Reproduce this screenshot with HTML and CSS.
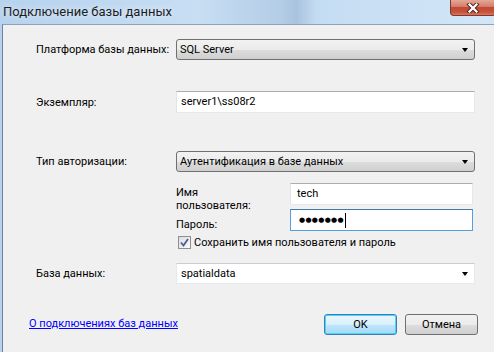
FILE: index.html
```html
<!DOCTYPE html>
<html lang="ru">
<head>
  <meta charset="UTF-8">
  <title>Подключение базы данных</title>
  <link rel="stylesheet" href="styles.css">
</head>
<body>
  <div class="window">
    <div class="titlebar">
      <span class="title">Подключение базы данных</span>
      <div class="close">
        <svg width="18" height="10" viewBox="0 0 18 10">
          <path d="M5.5 1.5 L12.5 8.5 M12.5 1.5 L5.5 8.5" stroke="#4e2a26" stroke-width="4.2" stroke-linecap="square"/>
          <path d="M5.5 1.5 L12.5 8.5 M12.5 1.5 L5.5 8.5" stroke="#ffffff" stroke-width="2.2" stroke-linecap="square"/>
        </svg>
      </div>
    </div>

    <div class="client">
      <div class="form">
        <label class="label">Платформа базы данных:</label>
        <div class="combo">SQL Server<span class="arrow"></span></div>

        <label class="label row-instance">Экземпляр:</label>
        <div class="textbox row-instance">server1\ss08r2</div>

        <label class="label row-auth">Тип авторизации:</label>
        <div class="combo row-auth">Аутентификация в базе данных<span class="arrow"></span></div>

        <div class="credentials">
          <label class="sublabel user">Имя<br>пользователя:</label>
          <div class="textbox small">tech</div>
          <label class="sublabel pass">Пароль:</label>
          <div class="textbox small focused"><span class="dots">●●●●●●●</span><span class="caret"></span></div>
        </div>

        <div class="check-row">
          <span class="checkbox">
            <svg width="9" height="9" viewBox="0 0 9 9"><path d="M1 4.5 L3.5 7.5 L8 1" fill="none" stroke="#4a5f97" stroke-width="1.8"/></svg>
          </span>
          <span>Сохранить имя пользователя и пароль</span>
        </div>

        <label class="label row-db">База данных:</label>
        <div class="combo editable row-db">spatialdata<span class="arrow"></span></div>
      </div>

      <div class="footer">
        <a class="help-link" href="#">О подключениях баз данных</a>
        <div class="buttons">
          <button class="btn default">OK</button>
          <button class="btn">Отмена</button>
        </div>
      </div>
    </div>
  </div>
</body>
</html>
```

FILE: styles.css
```css
html, body {
  margin: 0;
  padding: 0;
}
body {
  width: 494px;
  height: 352px;
  overflow: hidden;
  font-family: Roboto, "Liberation Sans", sans-serif;
  font-size: 11px;
  color: #000;
  background: #a9c6e3;
}
.window {
  height: 352px;
  display: flex;
  flex-direction: column;
  background: linear-gradient(90deg, #b6d2ee 0%, #c7def3 40%, #b4cde6 57%, #a9c3de 60%, #c4dcf2 64%, #d3e6f8 100%);
}
.titlebar {
  height: 24px;
  display: flex;
  align-items: flex-start;
  justify-content: space-between;
}
.title {
  padding: 4px 0 0 3px;
  font-size: 13px;
  line-height: 15px;
  color: #1e1e1e;
  text-shadow: 0 0 6px #eef6ff;
}
.close {
  width: 44px;
  height: 15px;
  margin-right: -2px;
  border: 1px solid #7a3a30;
  border-top: none;
  border-radius: 0 0 4px 4px;
  background: linear-gradient(#e5a898 0%, #d47c6a 45%, #c24a34 50%, #c8513b 80%, #d9775e 100%);
  display: flex;
  align-items: center;
  justify-content: center;
}
.client {
  flex: 1;
  margin-left: 2px;
  border-left: 1px solid #6f849a;
  border-top: 1px solid #8ea3b8;
  background: #f0f0f0;
  display: flex;
  flex-direction: column;
}
.form {
  display: grid;
  grid-template-columns: 140px 299px;
  padding: 14px 0 0 33px;
  align-items: center;
}
.label {
  line-height: 13px;
}
.combo {
  position: relative;
  height: 19px;
  line-height: 19px;
  padding-left: 3px;
  border: 1px solid #707070;
  border-radius: 3px;
  background: linear-gradient(#f2f2f2 0%, #ebebeb 50%, #dddddd 51%, #cfcfcf 100%);
}
.combo.editable {
  padding-left: 4px;
  background: #fff;
  border-color: #e3e9ef;
  border-top-color: #c9cdd4;
  border-radius: 0;
}
.arrow {
  position: absolute;
  right: 6px;
  top: 8px;
  width: 0;
  height: 0;
  border-left: 3.5px solid transparent;
  border-right: 3.5px solid transparent;
  border-top: 4px solid #000;
}
.textbox {
  height: 20px;
  line-height: 20px;
  padding-left: 4px;
  background: #fff;
  border: 1px solid #e3e9ef;
  border-top-color: #abadb3;
  border-left-color: #e2e3ea;
}
.textbox.small {
  padding-left: 6px;
}
.textbox.focused {
  border-color: #569de5;
  border-top-color: #3d7bad;
  display: flex;
  align-items: center;
}
.row-instance {
  margin-top: 31px;
}
.row-auth {
  margin-top: 38px;
}
.credentials {
  grid-column: 2;
  display: grid;
  grid-template-columns: 114px 183px;
  grid-template-rows: 22px 22px;
  row-gap: 4px;
  margin-top: 11px;
}
.sublabel {
  line-height: 13px;
  white-space: nowrap;
}
.sublabel.user {
  padding-top: 3px;
}
.sublabel.pass {
  padding-top: 9px;
}
.dots {
  font-family: "DejaVu Sans", sans-serif;
  font-size: 7px;
  letter-spacing: 0.3px;
  padding-left: 2px;
}
.caret {
  width: 1px;
  height: 15px;
  margin-left: 1px;
  background: #000;
}
.check-row {
  grid-column: 2;
  display: flex;
  align-items: center;
  gap: 3px;
  height: 13px;
  margin-top: 5px;
  padding-left: 2px;
}
.checkbox {
  width: 11px;
  height: 11px;
  border: 1px solid #8f8f8f;
  background: linear-gradient(135deg, #dcdcdc, #fbfbfb);
  display: flex;
  align-items: center;
  justify-content: center;
}
.row-db {
  margin-top: 14px;
}
.footer {
  display: flex;
  justify-content: space-between;
  align-items: center;
  padding: 30px 16px 0 26px;
}
.help-link {
  color: #0000ff;
  margin-top: -2px;
}
.buttons {
  display: flex;
  gap: 8px;
}
.btn {
  width: 73px;
  height: 21px;
  padding: 0;
  font-family: inherit;
  font-size: 11px;
  border: 1px solid #707070;
  border-radius: 3px;
  background: linear-gradient(#f2f2f2 0%, #ebebeb 50%, #dddddd 51%, #cfcfcf 100%);
}
.btn.default {
  border-color: #3c7fb1;
  box-shadow: inset 0 0 0 1px #48d4ff;
  background: linear-gradient(#eaf6fd 0%, #d9f0fc 50%, #bee6fd 51%, #a7d9f5 100%);
}
```
